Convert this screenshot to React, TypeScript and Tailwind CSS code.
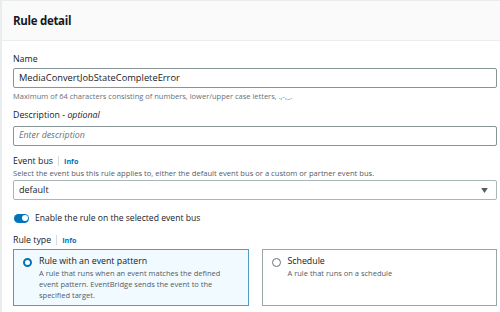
import React from "react";

const font = { fontFamily: '"Open Sans", "Noto Sans", sans-serif' };

function Info() {
  return (
    <span className="flex items-center">
      <span className="mx-[5px] h-[10px] w-px bg-[#d5dbdb]" />
      <span className="text-[7.2px] font-bold text-[#0073bb]">Info</span>
    </span>
  );
}

export default function App() {
  return (
    <div className="h-[312px] w-[500px] overflow-hidden bg-white text-[#16191f]" style={font}>
      <div className="h-[312px] border-l-2 border-t border-[#eaeded]">
        <div className="flex h-[40px] items-center border-b border-[#eaeded] bg-[#fafafa] px-[11px]">
          <span className="text-[11.5px] font-bold tracking-[-0.3px]">Rule detail</span>
        </div>
        <div className="pl-[11px] pr-[3px] pt-[12px]">
          <div className="text-[8.8px] leading-[12px]">Name</div>
          <div className="mt-[3px] flex h-[20px] items-center rounded-[2px] border border-[#879596] px-[5px] text-[9.3px]">
            MediaConvertJobStateCompleteError
          </div>
          <div className="mt-[3px] text-[7.5px] leading-[11px] text-[#687078]">
            Maximum of 64 characters consisting of numbers, lower/upper case letters, .,-,_.
          </div>
          <div className="mt-[7px] text-[8.8px] leading-[12px]">
            Description - <i>optional</i>
          </div>
          <div className="mt-[5px] flex h-[20px] items-center rounded-[2px] border border-[#879596] px-[5px] text-[8.8px] italic text-[#687078]">
            Enter description
          </div>
          <div className="mt-[9px] flex items-center text-[8.8px] leading-[12px]">
            Event bus <Info />
          </div>
          <div className="mt-[1px] text-[7.6px] leading-[10px] text-[#545b64]">
            Select the event bus this rule applies to, either the default event bus or a custom or partner event bus.
          </div>
          <div className="mt-[2px] flex h-[20px] items-center justify-between rounded-[2px] border border-[#aab7b8] px-[5px] text-[9px]">
            <span>default</span>
            <svg width="7" height="5" viewBox="0 0 8 6" className="mr-[3px]">
              <path d="M0 0h8L4 6z" fill="#545b64" />
            </svg>
          </div>
          <div className="mt-[12px] flex h-[12px] items-center gap-[6px]">
            <div className="relative ml-[1px] h-[9px] w-[15px] rounded-full bg-[#0073bb]">
              <div className="absolute right-[1.5px] top-[1.5px] h-[6px] w-[6px] rounded-full bg-white" />
            </div>
            <span className="text-[8.6px]">Enable the rule on the selected event bus</span>
          </div>
          <div className="mt-[10px] flex items-center text-[8.8px] leading-[12px]">
            Rule type <Info />
          </div>
          <div className="mt-[3px] flex gap-[13px]">
            <div className="h-[57px] flex-1 border border-[#4f9ec2] bg-[#f1faff] pl-[9px] pr-[6px] pt-[6px]">
              <div className="flex h-[12px] items-center gap-[7px]">
                <span className="box-border h-[9px] w-[9px] rounded-full border-[2.5px] border-[#0073bb] bg-white" />
                <span className="text-[8.8px]">Rule with an event pattern</span>
              </div>
              <div className="pl-[16px] text-[7.5px] leading-[11px] text-[#545b64]">
                A rule that runs when an event matches the defined event pattern. EventBridge sends the event to the specified target.
              </div>
            </div>
            <div className="h-[57px] flex-1 border border-[#9aa5a6] pl-[9px] pr-[6px] pt-[6px]">
              <div className="flex h-[12px] items-center gap-[7px]">
                <span className="box-border h-[9px] w-[9px] rounded-full border border-[#687078] bg-white" />
                <span className="text-[8.8px]">Schedule</span>
              </div>
              <div className="pl-[16px] text-[7.5px] leading-[11px] text-[#545b64]">
                A rule that runs on a schedule
              </div>
            </div>
          </div>
        </div>
      </div>
    </div>
  );
}
